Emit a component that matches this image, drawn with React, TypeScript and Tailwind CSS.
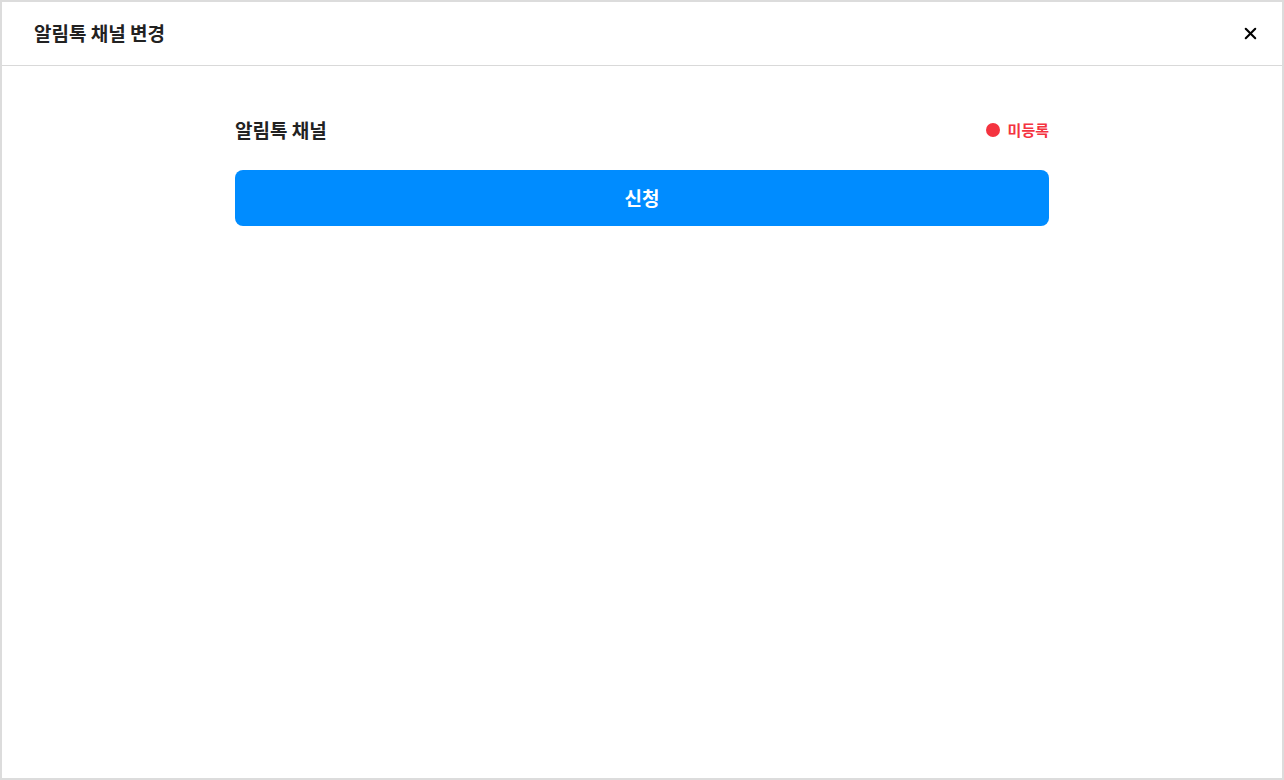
import { X } from "lucide-react";

export default function App() {
  return (
    <div
      className="h-[780px] w-[1284px] border-2 border-[#dcdcdc] bg-white flex flex-col"
      style={{ fontFamily: '"Noto Sans CJK KR", "Noto Sans", sans-serif' }}
    >
      <div className="h-[64px] shrink-0 border-b border-[#d9d9d9] flex items-center justify-between pl-[32px] pr-[22px]">
        <h1 className="text-[19px] font-bold text-[#222]">알림톡 채널 변경</h1>
        <button className="text-black">
          <X className="size-[19px]" strokeWidth={2.6} />
        </button>
      </div>
      <div className="flex-1 flex justify-center pt-[52px]">
        <div className="w-[814px] flex flex-col">
          <div className="flex items-center justify-between h-[24px]">
            <span className="text-[19px] font-bold text-[#222]">알림톡 채널</span>
            <div className="flex items-center gap-[8px]">
              <span className="size-[14px] rounded-full bg-[#f4333f]" />
              <span className="text-[15px] font-bold text-[#f4333f]">미등록</span>
            </div>
          </div>
          <button className="mt-[28px] h-[56px] w-full rounded-[8px] bg-[#008cff] text-white text-[19px] font-bold">
            신청
          </button>
        </div>
      </div>
    </div>
  );
}
